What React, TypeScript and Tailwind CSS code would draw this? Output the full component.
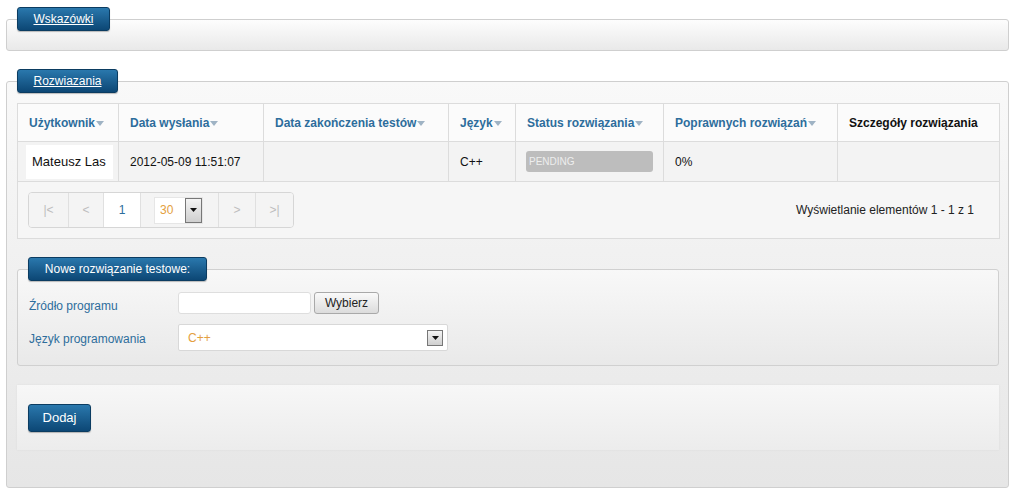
import React from "react";

const font = { fontFamily: '"Liberation Sans", Arial, sans-serif' };

function Legend({ children, underline = true, className = "" }: { children: React.ReactNode; underline?: boolean; className?: string }) {
  return (
    <div
      className={`relative z-10 inline-flex h-[24px] items-center justify-center rounded-[3px] border border-[#0b3c61] bg-linear-to-b from-[#2a78ad] to-[#0c4775] text-[12px] text-white shadow-[0_1px_1px_rgba(0,0,0,0.25)] ${underline ? "underline" : ""} ${className}`}
    >
      {children}
    </div>
  );
}

function Arrow() {
  return (
    <svg width="8" height="5" viewBox="0 0 8 5" className="ml-[1px] inline-block align-middle">
      <path d="M0 0 L8 0 L4 5 Z" fill="#9fb3c4" />
    </svg>
  );
}

function SelArrow({ className = "" }: { className?: string }) {
  return (
    <div className={`flex items-center justify-center border border-[#777] bg-linear-to-b from-[#f4f4f4] to-[#cfcfcf] ${className}`}>
      <svg width="7" height="4" viewBox="0 0 7 4">
        <path d="M0 0 L7 0 L3.5 4 Z" fill="#111" />
      </svg>
    </div>
  );
}

const headers = [
  { t: "Użytkownik", w: 101 },
  { t: "Data wysłania", w: 145 },
  { t: "Data zakończenia testów", w: 185 },
  { t: "Język", w: 67 },
  { t: "Status rozwiązania", w: 148 },
  { t: "Poprawnych rozwiązań", w: 174 },
  { t: "Szczegóły rozwiązania", w: 162, plain: true },
];

export default function App() {
  return (
    <div className="h-[494px] w-[1014px] overflow-hidden bg-white pl-[6px] pr-[5px] pt-[6px]" style={font}>
      {/* Wskazówki */}
      <Legend className="ml-[11px] w-[93px]">Wskazówki</Legend>
      <div className="-mt-[12px] h-[32px] rounded-[3px] border border-[#cfcfcf] bg-linear-to-b from-[#fdfdfd] to-[#e9e9e9]" />

      {/* Rozwiazania */}
      <Legend className="ml-[11px] mt-[18px] w-[101px]">Rozwiazania</Legend>
      <div className="-mt-[12px] h-[407px] rounded-[3px] border border-[#cfcfcf] bg-linear-to-b from-[#f9f9f9] to-[#e6e6e6] pl-[10px] pr-[9px] pt-[21px]">
        <table className="w-[982px] table-fixed border-collapse border border-[#dcdcdc] text-[12px]">
          <colgroup>
            {headers.map((h) => (
              <col key={h.t} style={{ width: h.w }} />
            ))}
          </colgroup>
          <thead>
            <tr className="h-[38px] bg-[#fbfbfb]">
              {headers.map((h) => (
                <th
                  key={h.t}
                  className={`border border-[#dcdcdc] pl-[11px] text-left font-bold ${h.plain ? "text-[#111]" : "text-[#2d6d9c]"}`}
                >
                  {h.t}
                  {!h.plain && <Arrow />}
                </th>
              ))}
            </tr>
          </thead>
          <tbody>
            <tr className="h-[40px] bg-[#f3f3f3] text-[#111]">
              <td className="border border-[#dcdcdc] pl-[8px]">
                <span className="inline-flex h-[34px] w-[87px] items-center bg-white pl-[6px] text-[13px]">Mateusz Las</span>
              </td>
              <td className="border border-[#dcdcdc] pl-[11px]">2012-05-09 11:51:07</td>
              <td className="border border-[#dcdcdc]"></td>
              <td className="border border-[#dcdcdc] pl-[11px]">C++</td>
              <td className="border border-[#dcdcdc] pl-[10px]">
                <div className="flex h-[21px] w-[127px] items-center rounded-[3px] bg-[#bdbdbd] pl-[3px] text-[10px] text-[#eeeeee]">PENDING</div>
              </td>
              <td className="border border-[#dcdcdc] pl-[11px]">0%</td>
              <td className="border border-[#dcdcdc]"></td>
            </tr>
            <tr className="h-[57px] bg-[#f6f6f6]">
              <td colSpan={7} className="border border-[#dcdcdc] px-[10px]">
                <div className="flex items-center justify-between">
                  <div className="flex h-[36px] overflow-hidden rounded-[4px] border border-[#d6d6d6] text-[12px] text-[#bdbdbd]">
                    <div className="flex w-[40px] items-center justify-center border-r border-[#e0e0e0] bg-[#f4f4f4]">|&lt;</div>
                    <div className="flex w-[35px] items-center justify-center border-r border-[#e0e0e0] bg-[#f4f4f4]">&lt;</div>
                    <div className="flex w-[37px] items-center justify-center border-r border-[#e0e0e0] bg-white text-[#2d6d9c]">1</div>
                    <div className="flex w-[78px] items-center border-r border-[#e0e0e0] bg-[#f4f4f4] pl-[13px]">
                      <div className="flex h-[27px] w-[49px] items-center justify-between border border-[#e6e6e6] bg-white pl-[5px]">
                        <span className="text-[#e4a040]">30</span>
                        <SelArrow className="h-[25px] w-[17px]" />
                      </div>
                    </div>
                    <div className="flex w-[37px] items-center justify-center border-r border-[#e0e0e0] bg-[#f4f4f4]">&gt;</div>
                    <div className="flex w-[37px] items-center justify-center bg-[#f4f4f4]">&gt;|</div>
                  </div>
                  <div className="pr-[15px] text-[12px] text-[#222]">Wyświetlanie elementów 1 - 1 z 1</div>
                </div>
              </td>
            </tr>
          </tbody>
        </table>

        {/* Nowe rozwiązanie testowe */}
        <Legend underline={false} className="ml-[11px] mt-[18px] w-[179px]">Nowe rozwiązanie testowe:</Legend>
        <div className="-mt-[12px] h-[97px] w-[982px] rounded-[3px] border border-[#d0d0d0] bg-linear-to-b from-[#f8f8f8] to-[#e9e9e9] pl-[11px] pt-[22px] text-[12px] text-[#2d6d9c]">
          <div className="flex h-[22px] items-center">
            <div className="w-[149px] pt-[5px]">Źródło programu</div>
            <div className="h-[22px] w-[133px] rounded-[3px] border border-[#dedede] bg-white" />
            <div className="ml-[3px] flex h-[22px] w-[65px] items-center justify-center rounded-[3px] border border-[#a9a9a9] bg-linear-to-b from-[#fafafa] to-[#dcdcdc] text-[#222]">Wybierz</div>
          </div>
          <div className="mt-[10px] flex h-[27px] items-center">
            <div className="w-[149px] pt-[2px]">Język programowania</div>
            <div className="flex h-[27px] w-[270px] items-center justify-between rounded-[2px] border border-[#d8d8d8] bg-white pl-[9px] pr-[4px]">
              <span className="text-[#e4a040]">C++</span>
              <SelArrow className="h-[16px] w-[16px]" />
            </div>
          </div>
        </div>

        {/* Dodaj */}
        <div className="mt-[19px] flex h-[65px] w-[982px] items-center bg-linear-to-b from-[#f7f7f7] to-[#ececec] pl-[11px] shadow-[0_0_2px_rgba(0,0,0,0.06)]">
          <div className="flex h-[28px] w-[63px] items-center justify-center rounded-[3px] border border-[#0b3c61] bg-linear-to-b from-[#2a78ad] to-[#0c4775] text-[13px] text-white shadow-[0_1px_1px_rgba(0,0,0,0.25)]">
            Dodaj
          </div>
        </div>
      </div>
    </div>
  );
}
